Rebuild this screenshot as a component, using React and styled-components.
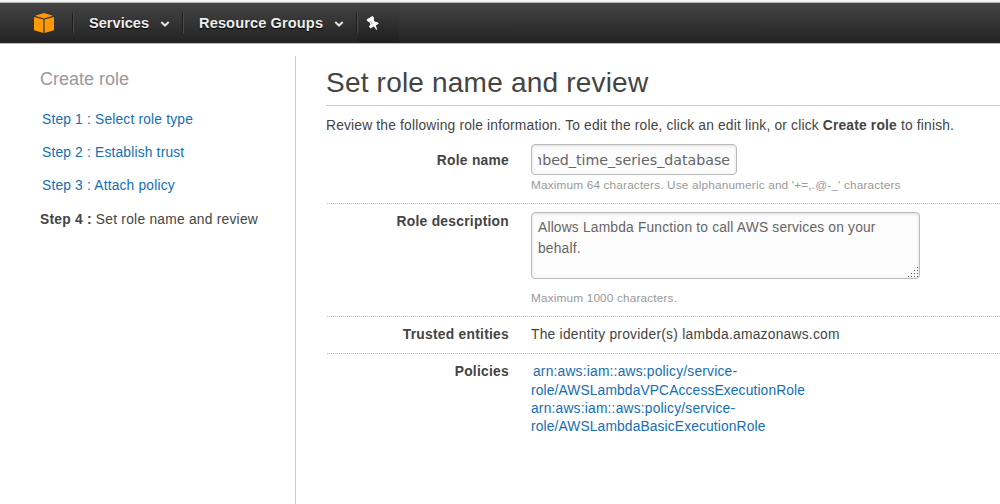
import React from "react";
import styled, { createGlobalStyle } from "styled-components";

const Global = createGlobalStyle`
  * { box-sizing: border-box; }
  html, body { margin: 0; background: #fff; overflow: hidden; }
  body { font-family: "Liberation Sans", Arial, sans-serif; font-size: 13.8px; color: #444; letter-spacing: 0.18px; }
`;

const Page = styled.div`
  width: 1000px;
  height: 504px;
  display: flex;
  flex-direction: column;
  overflow: hidden;
  white-space: nowrap;
`;

const NavBar = styled.header`
  flex: none;
  height: 44px;
  padding: 0 0 0 34px;
  display: flex;
  align-items: center;
  border-top: 2px solid #eef3f3;
  border-bottom: 1px solid #bbb;
  background: linear-gradient(#b5b5ae 0, #b5b5ae 1px, #444 1px, #222 100%);
  color: #eee;
  font-size: 14.6px;
  font-weight: bold;
  text-shadow: 0 1px 1px #000;
`;

const Logo = styled.svg`
  width: 20px;
  height: 20px;
  margin-right: 18px;
`;

const NavDivider = styled.span`
  width: 2px;
  height: 20px;
  border-left: 1px solid #1c1c1c;
  border-right: 1px solid #4c4c4c;
`;

const NavItem = styled.span`
  display: flex;
  align-items: center;
  width: ${(p) => p.$width}px;
  padding: 1px 12px 0 15px;
  justify-content: space-between;
  letter-spacing: ${(p) => p.$spacing}px;
`;

const Chevron = styled.svg`
  width: 10px;
  height: 6px;
  margin-top: 2px;
`;

const PinBox = styled.span`
  width: 41px;
  height: 38px;
  padding: 11px 0 0 8px;
  background: linear-gradient(rgba(0, 0, 0, 0), rgba(0, 0, 0, 0.12));
  svg { display: block; }
`;

const Body = styled.div`
  flex: 1;
  display: flex;
  padding-top: 12px;
`;

const Sidebar = styled.nav`
  width: 296px;
  padding: 12px 0 0 40px;
  border-right: 1px solid #ccc;
`;

const SideTitle = styled.h2`
  margin: 0 0 21px;
  font-size: 18px;
  line-height: 22px;
  font-weight: normal;
  letter-spacing: 0;
  color: #999;
`;

const Step = styled.div`
  height: 33px;
  line-height: 18px;
  padding-top: ${(p) => (p.$current ? 1 : 0)}px;
  padding-left: ${(p) => (p.$current ? 0 : 2)}px;
  color: ${(p) => (p.$current ? "#444" : "#146eb4")};
  letter-spacing: ${(p) => (p.$current ? 0.24 : 0.18)}px;
`;

const Main = styled.main`
  flex: 1;
  padding: 9px 0 0 30px;
`;

const Title = styled.h1`
  height: 41px;
  margin: 0;
  border-bottom: 1px solid #ccc;
  font-size: 28px;
  font-weight: normal;
  line-height: 35px;
  letter-spacing: 0.2px;
`;

const Intro = styled.p`
  margin: 0;
  height: 38px;
  line-height: 39px;
`;

const Row = styled.section`
  display: flex;
  height: ${(p) => p.$height}px;
  margin-left: 1px;
  border-bottom: ${(p) => (p.$last ? "none" : "1px dotted #bbb")};
`;

const Label = styled.div`
  width: 182px;
  padding-top: ${(p) => p.$top ?? 8}px;
  margin-right: 22px;
  text-align: right;
  font-weight: bold;
  line-height: 19px;
  letter-spacing: 0.27px;
`;

const Value = styled.div`
  flex: 1;
  padding-top: ${(p) => p.$top ?? 8}px;
  line-height: 19px;
  letter-spacing: 0.25px;
`;

const Field = styled.div`
  position: relative;
  width: ${(p) => p.$width}px;
  height: ${(p) => p.$height}px;
  border: 1px solid #bbb;
  border-radius: 4px;
  background: #fcfcfc;
  box-shadow: inset 0 1px 3px rgba(0, 0, 0, 0.12);
  padding: 0 6px;
  color: #666;
`;

const NameText = styled.div`
  display: flex;
  justify-content: flex-end;
  overflow: hidden;
  line-height: 30px;
  font-family: "DejaVu Sans", sans-serif;
  font-size: 14.2px;
  letter-spacing: 0;
`;

const FieldGroup = styled.div`
  padding-top: ${(p) => p.$top ?? 0}px;
`;

const AreaText = styled.div`
  padding-top: 4px;
  line-height: 21px;
  white-space: pre;
`;

const Grip = styled.svg`
  position: absolute;
  right: 1px;
  bottom: 1px;
  width: 10px;
  height: 10px;
`;

const Hint = styled.div`
  margin-top: ${(p) => p.$top}px;
  font-size: 11.8px;
  line-height: 15px;
  color: #999;
  letter-spacing: 0.16px;
`;

const Policy = styled.div`
  height: ${(p) => (p.$first ? 19 : 18)}px;
  line-height: 18px;
  padding-left: ${(p) => (p.$first ? 2 : 0)}px;
  color: #146eb4;
  letter-spacing: ${(p) => p.$spacing}px;
`;

const gripDots = [];
for (let r = 0; r < 4; r++) for (let c = 3 - r; c < 4; c++) gripDots.push([c * 3, r * 3]);

function Down() {
  return (
    <Chevron viewBox="0 0 10 6">
      <path d="M1.3 1 L5 4.5 L8.7 1" fill="none" stroke="#e4e4e4" strokeWidth="2" />
    </Chevron>
  );
}

export default function App() {
  return (
    <Page>
      <Global />
      <NavBar>
        <Logo viewBox="0 0 20 20" fill="#ff9900">
          <path d="M10 0 L19 2.8 L10 5.6 L1 2.8Z" />
          <path d="M0 4 L9.4 6.6 V20 L0 17.2Z" />
          <path d="M20 4 L10.6 6.6 V20 L20 17.2Z" />
        </Logo>
        <NavDivider />
        <NavItem $width={108} $spacing={0}>Services<Down /></NavItem>
        <NavDivider />
        <NavItem $width={172} $spacing={0.11}>Resource Groups<Down /></NavItem>
        <NavDivider />
        <PinBox>
          <svg width="14" height="16" viewBox="0 0 14 16" fill="#fff">
            <path d="M0.6 4.4 L6.4 1 L8.2 3 L7.6 4.6 L9.1 7.1 L11 6.9 L12.9 8.6 L9.8 10.6 L11.2 14.6 L10.2 14.7 L8 11.6 L4.2 13.4 L3 11.2 L4.5 9.4 L3.2 6.9 L1.6 6.6Z" />
            <path d="M4.6 6.2 L6.1 9.2" stroke="#777" strokeWidth="0.7" />
          </svg>
        </PinBox>
      </NavBar>
      <Body>
        <Sidebar>
          <SideTitle>Create role</SideTitle>
          <Step>Step 1 : Select role type</Step>
          <Step>Step 2 : Establish trust</Step>
          <Step>Step 3 : Attach policy</Step>
          <Step $current><b>Step 4 :</b> Set role name and review</Step>
        </Sidebar>
        <Main>
          <Title>Set role name and review</Title>
          <Intro>Review the following role information. To edit the role, click an edit link, or click <b>Create role</b> to finish.</Intro>
          <Row $height={60}>
            <Label $top={7}>Role name</Label>
            <FieldGroup>
              <Field $width={206} $height={31}><NameText>mbed_time_series_database</NameText></Field>
              <Hint $top={3}>Maximum 64 characters. Use alphanumeric and '+=,.@-_' characters</Hint>
            </FieldGroup>
          </Row>
          <Row $height={113}>
            <Label>Role description</Label>
            <FieldGroup $top={8}>
              <Field $width={389} $height={67}>
                <AreaText>{"Allows Lambda Function to call AWS services on your\nbehalf."}</AreaText>
                <Grip viewBox="0 0 10 10" fill="#555">
                  {gripDots.map(([x, y]) => <rect key={x + "-" + y} x={x} y={y} width="1" height="1" />)}
                </Grip>
              </Field>
              <Hint $top={12}>Maximum 1000 characters.</Hint>
            </FieldGroup>
          </Row>
          <Row $height={37}>
            <Label>Trusted entities</Label>
            <Value>The identity provider(s) lambda.amazonaws.com</Value>
          </Row>
          <Row $height={100} $last>
            <Label>Policies</Label>
            <Value $top={9}>
              <Policy $first $spacing={0.2}>arn:aws:iam::aws:policy/service-</Policy>
              <Policy $spacing={0.13}>role/AWSLambdaVPCAccessExecutionRole</Policy>
              <Policy $spacing={0.2}>arn:aws:iam::aws:policy/service-</Policy>
              <Policy $spacing={0.13}>role/AWSLambdaBasicExecutionRole</Policy>
            </Value>
          </Row>
        </Main>
      </Body>
    </Page>
  );
}
